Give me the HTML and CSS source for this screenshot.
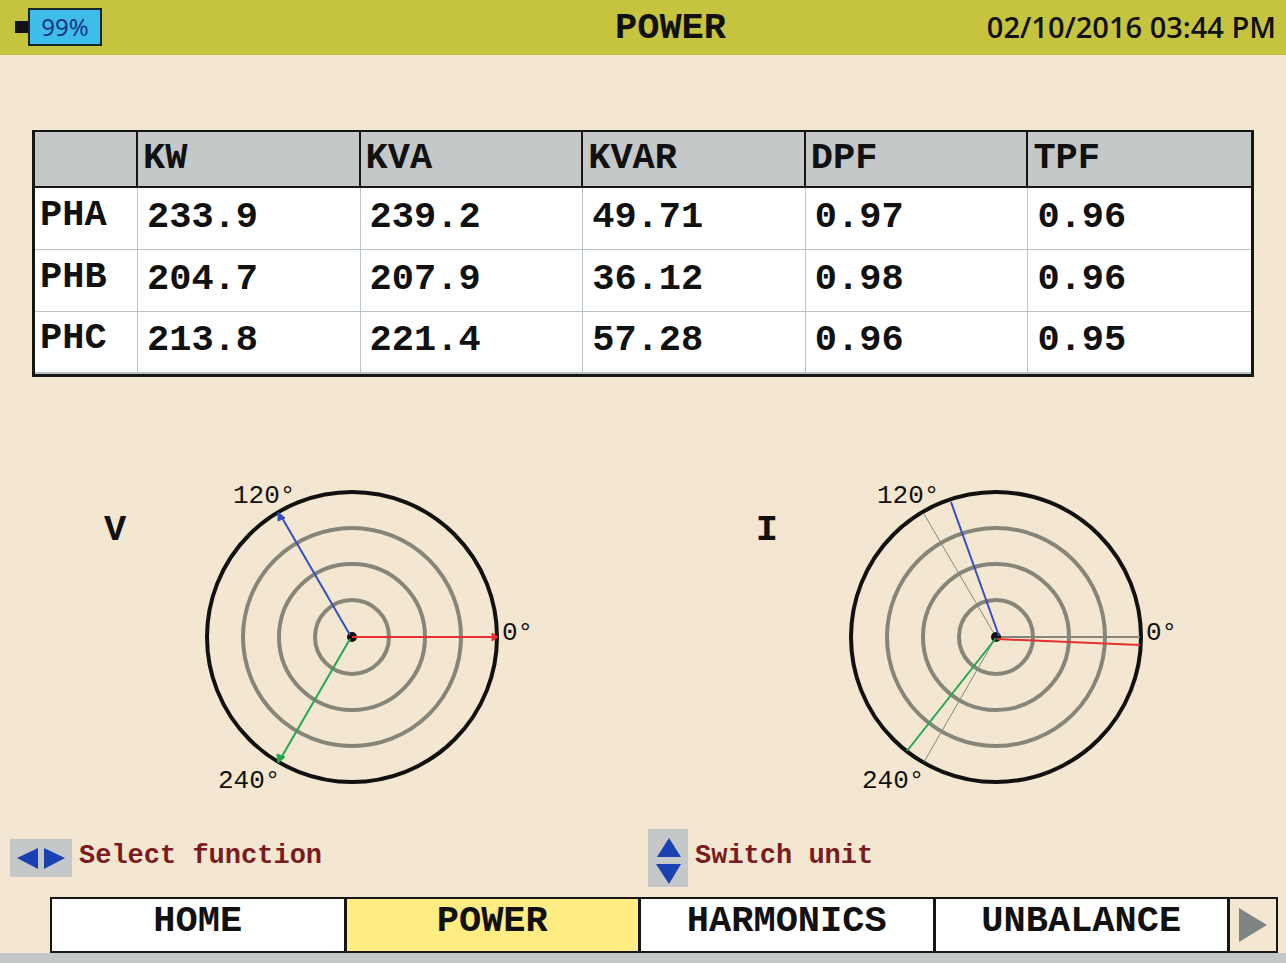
FILE: index.html
```html
<!DOCTYPE html>
<html lang="en">
<head>
<meta charset="utf-8">
<meta name="viewport" content="width=device-width, initial-scale=1">
<title>Power</title>
<link rel="stylesheet" href="styles.css">
</head>
<body>
<header class="topbar">
  <div class="battery"><span class="battery-tip"></span><span class="battery-body">99%</span></div>
  <h1 class="title">POWER</h1>
  <time class="clock" datetime="2016-02-10T15:44">02/10/2016 03:44 PM</time>
</header>

<main class="content">
  <div class="readings-wrap">
    <table class="readings">
      <thead>
        <tr><td class="corner"></td><th scope="col">KW</th><th scope="col">KVA</th><th scope="col">KVAR</th><th scope="col">DPF</th><th scope="col">TPF</th></tr>
      </thead>
      <tbody>
        <tr><th scope="row">PHA</th><td>233.9</td><td>239.2</td><td>49.71</td><td>0.97</td><td>0.96</td></tr>
        <tr><th scope="row">PHB</th><td>204.7</td><td>207.9</td><td>36.12</td><td>0.98</td><td>0.96</td></tr>
        <tr><th scope="row">PHC</th><td>213.8</td><td>221.4</td><td>57.28</td><td>0.96</td><td>0.95</td></tr>
      </tbody>
    </table>
  </div>

  <section class="plots">
    <figure class="plot">
      <figcaption class="plot-name">V</figcaption>
      <svg class="phasor" viewBox="0 0 340 320" role="img" aria-label="Voltage phasor diagram">
        <g class="rings"><circle cx="152" cy="159" r="37"/><circle cx="152" cy="159" r="73"/><circle cx="152" cy="159" r="109"/></g>
        <circle class="rim" cx="152" cy="159" r="145"/>
        <circle class="hub" cx="152" cy="159" r="5"/>
        <g class="red"><path d="M152 159H292"/><path class="tip" d="M292 155L298 159L292 163Z"/></g>
        <g class="blue"><path d="M150 157L81 38"/><path class="tip" d="M78 34L78 43L85 40Z"/></g>
        <g class="green"><path d="M150 161L81 280"/><path class="tip" d="M78 285L77 276L85 279Z"/></g>
        <text x="33" y="25">120°</text><text x="302" y="162">0°</text><text x="18" y="310">240°</text>
      </svg>
    </figure>
    <figure class="plot">
      <figcaption class="plot-name plot-name-end">I</figcaption>
      <svg class="phasor" viewBox="0 0 340 320" role="img" aria-label="Current phasor diagram">
        <g class="rings"><circle cx="152" cy="159" r="37"/><circle cx="152" cy="159" r="73"/><circle cx="152" cy="159" r="109"/></g>
        <circle class="rim" cx="152" cy="159" r="145"/>
        <g class="axes"><path class="axis-main" d="M152 159H296"/><path d="M152 159L80 36M152 159L80 284"/></g>
        <circle class="hub" cx="152" cy="159" r="5"/>
        <path class="red" d="M153 161L296 167"/>
        <path class="blue" d="M155 158L107 24"/>
        <path class="green" d="M152 160L63 273"/>
        <text x="33" y="25">120°</text><text x="302" y="162">0°</text><text x="18" y="310">240°</text>
      </svg>
    </figure>
  </section>
</main>

<div class="hints">
  <p class="hint">
    <svg class="key key-wide" viewBox="0 0 62 38" aria-hidden="true"><path d="M7 19L28 9V30ZM34 9L55 19L34 30Z"/></svg>
    <span class="hint-text">Select function</span>
  </p>
  <p class="hint">
    <svg class="key key-tall" viewBox="0 0 40 58" aria-hidden="true"><path d="M21 9L33 28H9ZM8 35H33L21 55Z"/></svg>
    <span class="hint-text">Switch unit</span>
  </p>
</div>

<nav class="tabs" aria-label="Functions">
  <button class="tab" type="button">HOME</button>
  <button class="tab tab-active" type="button" aria-current="page">POWER</button>
  <button class="tab" type="button">HARMONICS</button>
  <button class="tab" type="button">UNBALANCE</button>
  <button class="next" type="button" aria-label="More functions"><svg class="next-icon" viewBox="0 0 28 34" aria-hidden="true"><path d="M0 0L28 17L0 34Z"/></svg></button>
</nav>
<footer class="baseline"></footer>
</body>
</html>
```
FILE: styles.css
```css
* {
  box-sizing: border-box;
}

body {
  margin: 0;
  min-height: 100vh;
  display: flex;
  flex-direction: column;
  background: #f3e7d1;
  color: #111;
  font-family: "Liberation Mono", "Courier New", monospace;
  font-size: 37px;
  font-weight: 700;
  line-height: 40px;
}

.topbar {
  display: grid;
  grid-template-columns: 12fr auto 11fr;
  align-items: center;
  min-height: 55px;
  padding: 0 10px 0 15px;
  background: #c6c43e;
}

.battery {
  display: flex;
  align-items: center;
  padding-bottom: 2px;
}

.battery-tip {
  width: 13px;
  height: 12px;
  background: #111;
}

.battery-body {
  width: 74px;
  border: 2px solid #14242c;
  background: #3fbdea;
  color: #17357f;
  font: 400 24px/34px "Noto Sans", "Open Sans", sans-serif;
  text-align: center;
}

.title {
  margin: 0;
  font-size: 37px;
}

.clock {
  justify-self: end;
  font: 600 29px/40px "Open Sans", "Noto Sans", sans-serif;
  padding-bottom: 2px;
}

.content {
  flex: 1;
}

.readings-wrap {
  padding: 75px 32px 101px;
}

.readings {
  width: 100%;
  table-layout: fixed;
  border-collapse: separate;
  border-spacing: 0;
  border: 3px solid #161616;
  border-top-width: 2px;
  background: #fff;
}

.readings th,
.readings td {
  height: 62px;
  padding: 0 0 4px 9px;
  border-right: 1px solid #b9c4c4;
  border-bottom: 1px solid #b9c4c4;
  text-align: left;
}

.readings tbody th {
  padding: 0 0 8px 5px;
}

.readings thead th,
.readings thead td {
  height: 56px;
  padding: 0 0 2px 5px;
  background: #c4c8c9;
  border-right: 2px solid #161616;
  border-bottom: 2px solid #161616;
}

.readings tbody tr:last-child td,
.readings tbody tr:last-child th {
  border-bottom-width: 2px;
}

.readings .corner {
  width: 103px;
}

.readings th:last-child,
.readings td:last-child {
  border-right: 0;
}

.plots {
  display: grid;
  grid-template-columns: 1fr 1fr;
  margin-right: -2px;
}

.plot {
  display: flex;
  justify-content: center;
  gap: 66px;
  margin: 0;
}

.plot-name {
  width: 30px;
  padding-top: 32px;
}

.plot-name-end {
  text-align: right;
}

.phasor {
  width: 340px;
  height: 320px;
  fill: none;
  stroke-width: 2;
}

.phasor text {
  fill: #111;
  font-size: 26px;
  font-weight: 400;
}

.rings {
  stroke: #85857a;
  stroke-width: 4;
}

.rim {
  stroke: #111;
  stroke-width: 4;
}

.hub {
  fill: #111;
}

.axes {
  stroke: #85857a;
  stroke-width: 1;
}

.axis-main {
  stroke-width: 2;
}

.red {
  stroke: #e5302e;
}

.blue {
  stroke: #3350c0;
}

.green {
  stroke: #25a84d;
}

.red .tip {
  fill: #e5302e;
}

.blue .tip {
  fill: #3350c0;
}

.green .tip {
  fill: #25a84d;
}

.tip {
  stroke-width: 1;
}

.hints {
  display: grid;
  grid-template-columns: 1fr 1fr;
  padding: 0 0 10px 10px;
  color: #7a1b20;
  font-size: 27px;
}

.hint {
  display: flex;
  align-items: center;
  gap: 7px;
  margin: 0;
}

.hint-text {
  padding-bottom: 4px;
}

.key {
  background: #c4c8c9;
  fill: #1a41b4;
}

.key-wide {
  width: 62px;
  height: 38px;
}

.key-tall {
  width: 40px;
  height: 58px;
}

.tabs {
  display: grid;
  grid-template-columns: repeat(4, 1fr) 46px;
  gap: 3px;
  margin: 0 8px 0 50px;
  padding: 2px;
  background: #161616;
}

.tab,
.next {
  height: 52px;
  margin: 0;
  border: 0;
  background: #fff;
  color: inherit;
  font: inherit;
}

.tab {
  padding: 0 0 8px;
}

.tab-active {
  background: #ffec82;
}

.next {
  display: flex;
  align-items: center;
  justify-content: center;
  padding: 0;
  background: #f3e7d1;
}

.next-icon {
  width: 28px;
  height: 34px;
  fill: #7f8585;
}

.baseline {
  height: 10px;
  background: #c4c8c9;
}
```
